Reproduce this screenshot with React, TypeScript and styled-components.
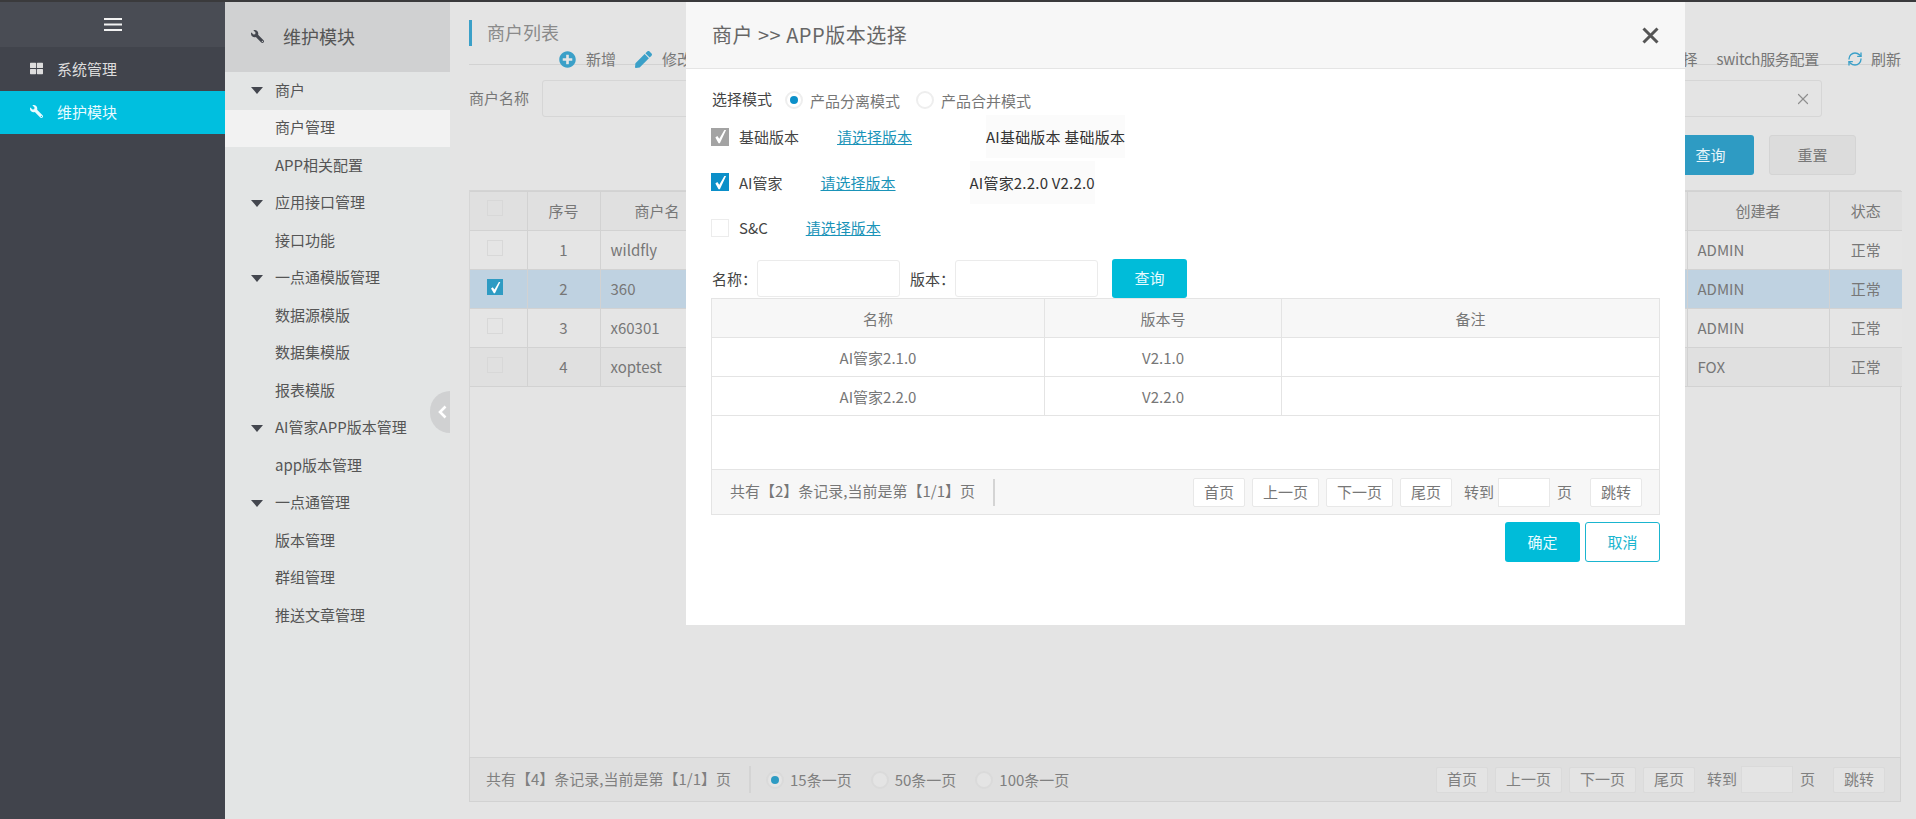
import React from "react";
import styled, { createGlobalStyle } from "styled-components";
import { FaWrench, FaThLarge, FaPlusCircle, FaPen } from "react-icons/fa";
import { RefreshCw, X } from "lucide-react";

const Global = createGlobalStyle`
  html, body { margin: 0; padding: 0; height: 100%; overflow: hidden; }
  body { font-family: "Noto Sans CJK SC", "Liberation Sans", sans-serif; font-size: 15px; color: #666; }
  * { box-sizing: border-box; }
`;

const Page = styled.div`
  width: 1916px; height: 819px; position: relative; display: flex; flex-direction: column;
  border-top: 2px solid #3a3a3c; overflow: hidden;
`;
const Columns = styled.div`display: flex; flex: 1; min-height: 0;`;

/* left rail */
const Rail = styled.aside`width: 225px; flex: none; background: #41444c; display: flex; flex-direction: column;`;
const RailTop = styled.div`height: 45px; background: #494c54; display: flex; align-items: center; justify-content: center; color: #f2f2f2;`;
const RailItem = styled.div<{ $active?: boolean }>`
  height: ${(p) => (p.$active ? 43 : 44)}px; display: flex; align-items: center; padding: 0 0 2px 30px; gap: 14px;
  color: ${(p) => (p.$active ? "#e8fbff" : "#dddddd")};
  background: ${(p) => (p.$active ? "#00bfdf" : "transparent")};
  svg { width: 13px; height: 13px; }
`;

/* second column */
const NavColumn = styled.nav`width: 225px; flex: none; background: #e3e5e5; position: relative;`;
const NavHead = styled.div`
  height: 70px; background: #d0d1d2; display: flex; align-items: center; padding: 0 0 2px 26px; gap: 19px;
  font-size: 18px; color: #555; svg { width: 13px; height: 13px; color: #44474f; }
`;
const NavRow = styled.div<{ $current?: boolean; $group?: boolean }>`
  height: 37.5px; display: flex; align-items: center; padding: 0 0 3px 50px; position: relative; color: #555;
  background: ${(p) => (p.$current ? "#f2f2f2" : "transparent")};
  ${(p) => p.$group && `&::before { content: ""; position: absolute; left: 26px; top: 15px; border-left: 6.5px solid transparent; border-right: 6.5px solid transparent; border-top: 7px solid #44474f; }`}
`;
const Collapse = styled.div`
  position: absolute; right: 0; top: 389px; width: 20px; height: 42px; background: #d0d1d2;
  border-radius: 21px 0 0 21px; display: flex; align-items: center; justify-content: flex-end; padding-right: 3px;
`;

/* main */
const Main = styled.main`
  flex: 1; min-width: 0; background: #e4e4e4; padding: 18px 15px 17px 19px; display: flex; flex-direction: column; color: #777;
`;
const TitleBar = styled.div`height: 45px; flex: none; border-bottom: 1px solid #d2d2d2;`;
const Title = styled.div`
  height: 26px; border-left: 3px solid #3ba0c8; padding-left: 15px; font-size: 18px; line-height: 24px; color: #8a8a8a;
`;
const Toolbar = styled.div`display: flex; align-items: center; height: 20px; margin-top: 3px; padding-left: 90px; color: #777;`;
const Tool = styled.span`display: inline-flex; align-items: center; gap: 10px; margin-right: 19px; white-space: nowrap; line-height: 20px;`;
const ToolIcon = styled.span`display: inline-flex; color: #3ba0c8; svg { width: 17px; height: 17px; }`;
const ToolRight = styled.div`margin-left: auto; display: flex; align-items: center;`;
const SwitchTool = styled(Tool)`letter-spacing: -0.3px;`;
const RefreshTool = styled(Tool)`margin: 0 0 0 9px; gap: 8px; svg { width: 16px; height: 16px; }`;
const SearchRow = styled.div`display: flex; align-items: center; margin-top: 15px; height: 37px; flex: none;`;
const SearchLabel = styled.label`width: 73px; flex: none; padding-bottom: 2px;`;
const SearchBox = styled.div`
  width: 1280px; height: 37px; border: 1px solid #d6d6d6; border-radius: 3px; display: flex; align-items: center;
  justify-content: flex-end; padding-right: 9px; color: #8f8f8f;
`;
const Actions = styled.div`display: flex; justify-content: flex-end; gap: 15px; margin-top: 18px; padding-right: 45px; flex: none;`;
const QueryBtn = styled.button`
  width: 87px; height: 40px; padding: 0 0 2px; background: #2e9bc3; color: #e9f6fa; border: none; border-radius: 3px; font: inherit;
`;
const ResetBtn = styled.button`
  width: 87px; height: 40px; padding: 0 0 2px; background: #dcdcdc; color: #777; border: 1px solid #d4d4d4; border-radius: 3px; font: inherit;
`;
const TableArea = styled.div`
  flex: 1; min-height: 0; margin-top: 15px; border-left: 1px solid #d6d6d6; border-right: 1px solid #d6d6d6; border-top: 1px solid #d4d4d4;
`;
const Grid = styled.table`
  width: 100%; table-layout: fixed; border-collapse: collapse;
`;
const HeadCell = styled.th`
  height: 39px; padding: 0 0 2px; font-weight: 400; text-align: center; background: #e0e0e0; border: 1px solid #d2d2d2; color: #777;
  &:first-child { border-left: none; } &:last-child { border-right: none; }
`;
const Row = styled.tr<{ $tone: "plain" | "dim" | "selected" }>`
  background: ${(p) => (p.$tone === "selected" ? "#bfd2e1" : p.$tone === "dim" ? "#e0e0e0" : "#e5e5e5")};
`;
const Cell = styled.td<{ $center?: boolean }>`
  height: 39px; padding: 0 10px 2px; border: 1px solid #d2d2d2; text-align: ${(p) => (p.$center ? "center" : "left")}; color: #777;
  &:first-child { border-left: none; } &:last-child { border-right: none; }
`;
const TickCell = styled(Cell)`padding: 0;`;
const TickBox = styled.span<{ $on?: boolean }>`
  display: flex; width: 16px; height: 16px; margin: 0 0 4px 17px; border: 1px solid ${(p) => (p.$on ? "#2e9bc3" : "#d8d8d8")};
  background: ${(p) => (p.$on ? "#2e9bc3" : "transparent")}; color: #fff; align-items: center; justify-content: center;
`;

/* pager */
const Pager = styled.div<{ $tall?: boolean }>`
  height: ${(p) => (p.$tall ? 46 : 45)}px; flex: none; display: flex; align-items: center;
  background: ${(p) => (p.$tall ? "#f7f7f7" : "#dfdfdf")};
  border: 1px solid ${(p) => (p.$tall ? "#e4e4e4" : "#d2d2d2")};
  padding: 0 ${(p) => (p.$tall ? 17 : 15)}px 0 ${(p) => (p.$tall ? 18 : 16)}px;
  color: ${(p) => (p.$tall ? "#777" : "#808080")};
`;
const PagerInfo = styled.span`white-space: nowrap; padding-bottom: 3px;`;
const PagerRule = styled.span`width: 2px; height: 27px; margin-left: 18px; background: #d4d4d4;`;
const PagerRadios = styled.div`display: flex; align-items: center; margin-left: 15px; gap: 19px;`;
const PagerRadio = styled.span`display: inline-flex; align-items: center; gap: 6px; white-space: nowrap;`;
const PagerEnd = styled.div`margin-left: auto; display: flex; align-items: center; gap: 7px;`;
const PageBtn = styled.button<{ $tall?: boolean; $dim?: boolean }>`
  height: ${(p) => (p.$tall ? 29 : 26)}px; padding: 0 10px 2px; font: inherit; color: inherit; border-radius: 2px; white-space: nowrap;
  background: ${(p) => (p.$dim ? "#e4e4e4" : "#fff")}; border: 1px solid ${(p) => (p.$dim ? "#dadada" : "#e8e8e8")};
`;
const PageText = styled.span`white-space: nowrap; padding-bottom: 2px;`;
const GotoText = styled(PageText)`margin-left: 5px;`;
const GotoBox = styled.span<{ $tall?: boolean; $dim?: boolean }>`
  width: 52px; margin-left: -3px; height: ${(p) => (p.$tall ? 29 : 27)}px; border: 1px solid ${(p) => (p.$dim ? "#dadada" : "#e8e8e8")};
  background: ${(p) => (p.$dim ? "#e4e4e4" : "#fff")};
`;
const JumpBtn = styled(PageBtn)`margin-left: 11px;`;

const RadioDot = styled.span<{ $on?: boolean; $dim?: boolean }>`
  width: 18px; height: 18px; flex: none; border-radius: 50%; display: inline-flex; align-items: center; justify-content: center;
  border: 2px solid ${(p) => (p.$dim ? "#dadada" : "#eeeeee")}; background: ${(p) => (p.$dim ? "#e4e4e4" : "#fff")};
  &::after { content: ""; width: 8px; height: 8px; border-radius: 50%; background: ${(p) => (p.$on ? (p.$dim ? "#2e9bc3" : "#0b8fc9") : "transparent")}; }
`;

/* modal */
const Modal = styled.section`
  position: absolute; left: 686px; top: 0; width: 999px; height: 623px; background: #fff; display: flex; flex-direction: column; color: #666;
`;
const ModalHead = styled.header`
  height: 67px; flex: none; background: #f7f7f7; border-bottom: 1px solid #e5e5e5; display: flex; align-items: center;
  justify-content: space-between; padding: 0 26px 2px; font-size: 20px; letter-spacing: 0.5px; color: #666;
`;
const CloseMark = styled.span`display: inline-flex; color: #555; margin-top: 2px;`;
const ModalBody = styled.div`flex: 1; padding: 17px 25px 0; display: flex; flex-direction: column;`;
const ModeRow = styled.div`display: flex; align-items: center; height: 28px; padding-left: 1px;`;
const ModeLabel = styled.span`color: #444; margin-right: 13px; padding-bottom: 3px;`;
const ModeOption = styled.span`display: inline-flex; align-items: center; gap: 7px; margin-right: 16px; color: #777;`;
const OptionRow = styled.div`display: flex; align-items: center; height: 45.5px; &:first-of-type { margin-top: 2px; }`;
const OptionBox = styled.span<{ $state: "off" | "on" | "locked" }>`
  width: 18px; height: 18px; flex: none; margin-right: 10px; display: flex; align-items: center; justify-content: center; color: #fff;
  background: ${(p) => (p.$state === "on" ? "#0b8fc9" : p.$state === "locked" ? "#a3a3a3" : "#fff")};
  border: 1px solid ${(p) => (p.$state === "on" ? "#0b8fc9" : p.$state === "locked" ? "#a3a3a3" : "#ececec")};
`;
const OptionName = styled.span`color: #444;`;
const OptionLink = styled.a`color: #1a93b8; text-decoration: underline; margin-left: 38px;`;
const OptionPicked = styled.span`margin-left: 74px; height: 43px; display: flex; align-items: center; background: #fbfbfb; color: #333; letter-spacing: 0.2px;`;
const FilterRow = styled.div`display: flex; align-items: center; height: 39px; margin-top: 8.5px; padding-left: 1px; color: #444;`;
const FilterLabel = styled.span`width: 45px; flex: none;`;
const FilterLabelNext = styled(FilterLabel)`margin-left: 10px;`;
const FilterBox = styled.span`width: 143px; height: 37px; border: 1px solid #ebebeb; border-radius: 3px; background: #fff;`;
const FilterBtn = styled.button`
  width: 75px; height: 39px; margin-left: 14px; padding: 0 0 2px; background: #00bcd9; color: #e8fbff; border: none; border-radius: 3px; font: inherit;
`;
const PickTable = styled.table`width: 100%; table-layout: fixed; border-collapse: collapse;`;
const PickHead = styled.th`
  height: 39px; padding: 0; font-weight: 400; background: #f7f7f7; border: 1px solid #e4e4e4; color: #777;
`;
const PickCell = styled.td`height: 39px; padding: 0; text-align: center; border: 1px solid #e4e4e4; color: #777;`;
const PickEmpty = styled.div`height: 53px; border-left: 1px solid #e4e4e4; border-right: 1px solid #e4e4e4;`;
const ModalActions = styled.div`display: flex; justify-content: flex-end; gap: 5px; margin-top: 7px;`;
const OkBtn = styled.button`width: 75px; height: 40px; padding: 0 0 2px; background: #00bcd9; color: #e8fbff; border: none; border-radius: 3px; font: inherit;`;
const CancelBtn = styled.button`width: 75px; height: 40px; padding: 0 0 2px; background: #fff; color: #1ab5cf; border: 1px solid #1ab5cf; border-radius: 3px; font: inherit;`;

const Burger = () => (
  <svg width="18" height="13" viewBox="0 0 18 13" fill="currentColor">
    <rect width="18" height="2" y="0" />
    <rect width="18" height="2" y="5.5" />
    <rect width="18" height="2" y="11" />
  </svg>
);
const Wrench = () => <FaWrench style={{ transform: "scaleX(-1)" }} />;
const Tick = ({ size }: { size: number }) => (
  <svg width={size} height={size} viewBox="0 0 14 14" fill="currentColor">
    <path d="M2.2 8 4 6.6l1.9 2.6L10.6 1h1.6L6.4 13.2H5.2z" />
  </svg>
);

const nav: [string, boolean?, boolean?][] = [
  ["商户", true],
  ["商户管理", false, true],
  ["APP相关配置"],
  ["应用接口管理", true],
  ["接口功能"],
  ["一点通模版管理", true],
  ["数据源模版"],
  ["数据集模版"],
  ["报表模版"],
  ["AI管家APP版本管理", true],
  ["app版本管理"],
  ["一点通管理", true],
  ["版本管理"],
  ["群组管理"],
  ["推送文章管理"],
];

const rows = [
  { n: 1, name: "wildfly", by: "ADMIN", tone: "plain" as const },
  { n: 2, name: "360", by: "ADMIN", tone: "selected" as const },
  { n: 3, name: "x60301", by: "ADMIN", tone: "plain" as const },
  { n: 4, name: "xoptest", by: "FOX", tone: "dim" as const },
];

const PageControls = ({ tall, dim }: { tall?: boolean; dim?: boolean }) => (
  <PagerEnd>
    <PageBtn $tall={tall} $dim={dim}>首页</PageBtn>
    <PageBtn $tall={tall} $dim={dim}>上一页</PageBtn>
    <PageBtn $tall={tall} $dim={dim}>下一页</PageBtn>
    <PageBtn $tall={tall} $dim={dim}>尾页</PageBtn>
    <GotoText>转到</GotoText>
    <GotoBox $tall={tall} $dim={dim} />
    <PageText>页</PageText>
    <JumpBtn $tall={tall} $dim={dim}>跳转</JumpBtn>
  </PagerEnd>
);

export default function App() {
  return (
    <Page>
      <Global />
      <Columns>
        <Rail>
          <RailTop><Burger /></RailTop>
          <RailItem><FaThLarge />系统管理</RailItem>
          <RailItem $active><Wrench />维护模块</RailItem>
        </Rail>
        <NavColumn>
          <NavHead><Wrench />维护模块</NavHead>
          {nav.map(([t, g, c]) => (
            <NavRow key={t} $group={g} $current={c}>{t}</NavRow>
          ))}
          <Collapse>
            <svg width="9" height="14" viewBox="0 0 9 14" fill="none" stroke="#fff" strokeWidth="2.6"><path d="M7.5 1.5 2 7l5.5 5.5" /></svg>
          </Collapse>
        </NavColumn>
        <Main>
          <TitleBar>
            <Title>商户列表</Title>
            <Toolbar>
              <Tool><ToolIcon><FaPlusCircle /></ToolIcon>新增</Tool>
              <Tool><ToolIcon><FaPen /></ToolIcon>修改</Tool>
              <ToolRight>
                <Tool>版本选择</Tool>
                <SwitchTool>switch服务配置</SwitchTool>
                <RefreshTool><ToolIcon><RefreshCw strokeWidth={2} /></ToolIcon>刷新</RefreshTool>
              </ToolRight>
            </Toolbar>
          </TitleBar>
          <SearchRow>
            <SearchLabel>商户名称</SearchLabel>
            <SearchBox><X size={18} strokeWidth={1.6} /></SearchBox>
          </SearchRow>
          <Actions>
            <QueryBtn>查询</QueryBtn>
            <ResetBtn>重置</ResetBtn>
          </Actions>
          <TableArea>
            <Grid>
              <colgroup>
                <col width="57" /><col width="73" /><col width="114" /><col width="973" /><col width="142" /><col width="73" />
              </colgroup>
              <thead>
                <tr>
                  <HeadCell><TickBox /></HeadCell>
                  <HeadCell>序号</HeadCell>
                  <HeadCell>商户名</HeadCell>
                  <HeadCell />
                  <HeadCell>创建者</HeadCell>
                  <HeadCell>状态</HeadCell>
                </tr>
              </thead>
              <tbody>
                {rows.map((r) => (
                  <Row key={r.n} $tone={r.tone}>
                    <TickCell>
                      <TickBox $on={r.tone === "selected"}>{r.tone === "selected" && <Tick size={13} />}</TickBox>
                    </TickCell>
                    <Cell $center>{r.n}</Cell>
                    <Cell>{r.name}</Cell>
                    <Cell />
                    <Cell>{r.by}</Cell>
                    <Cell $center>正常</Cell>
                  </Row>
                ))}
              </tbody>
            </Grid>
          </TableArea>
          <Pager>
            <PagerInfo>共有【4】条记录,当前是第【1/1】页</PagerInfo>
            <PagerRule />
            <PagerRadios>
              <PagerRadio><RadioDot $on $dim />15条一页</PagerRadio>
              <PagerRadio><RadioDot $dim />50条一页</PagerRadio>
              <PagerRadio><RadioDot $dim />100条一页</PagerRadio>
            </PagerRadios>
            <PageControls dim />
          </Pager>
        </Main>
      </Columns>

      <Modal>
        <ModalHead>
          商户 &gt;&gt; APP版本选择
          <CloseMark>
            <svg width="17" height="17" viewBox="0 0 17 17" stroke="currentColor" strokeWidth="3"><path d="M1.5 1.5l14 14M15.5 1.5l-14 14" /></svg>
          </CloseMark>
        </ModalHead>
        <ModalBody>
          <ModeRow>
            <ModeLabel>选择模式</ModeLabel>
            <ModeOption><RadioDot $on />产品分离模式</ModeOption>
            <ModeOption><RadioDot />产品合并模式</ModeOption>
          </ModeRow>
          <OptionRow>
            <OptionBox $state="locked"><Tick size={15} /></OptionBox>
            <OptionName>基础版本</OptionName>
            <OptionLink>请选择版本</OptionLink>
            <OptionPicked>AI基础版本 基础版本</OptionPicked>
          </OptionRow>
          <OptionRow>
            <OptionBox $state="on"><Tick size={15} /></OptionBox>
            <OptionName>AI管家</OptionName>
            <OptionLink>请选择版本</OptionLink>
            <OptionPicked>AI管家2.2.0 V2.2.0</OptionPicked>
          </OptionRow>
          <OptionRow>
            <OptionBox $state="off" />
            <OptionName>S&amp;C</OptionName>
            <OptionLink>请选择版本</OptionLink>
          </OptionRow>
          <FilterRow>
            <FilterLabel>名称：</FilterLabel>
            <FilterBox />
            <FilterLabelNext>版本：</FilterLabelNext>
            <FilterBox />
            <FilterBtn>查询</FilterBtn>
          </FilterRow>
          <PickTable>
            <colgroup><col width="333" /><col width="237" /><col /></colgroup>
            <thead>
              <tr><PickHead>名称</PickHead><PickHead>版本号</PickHead><PickHead>备注</PickHead></tr>
            </thead>
            <tbody>
              <tr><PickCell>AI管家2.1.0</PickCell><PickCell>V2.1.0</PickCell><PickCell /></tr>
              <tr><PickCell>AI管家2.2.0</PickCell><PickCell>V2.2.0</PickCell><PickCell /></tr>
            </tbody>
          </PickTable>
          <PickEmpty />
          <Pager $tall>
            <PagerInfo>共有【2】条记录,当前是第【1/1】页</PagerInfo>
            <PagerRule />
            <PageControls tall />
          </Pager>
          <ModalActions>
            <OkBtn>确定</OkBtn>
            <CancelBtn>取消</CancelBtn>
          </ModalActions>
        </ModalBody>
      </Modal>
    </Page>
  );
}
